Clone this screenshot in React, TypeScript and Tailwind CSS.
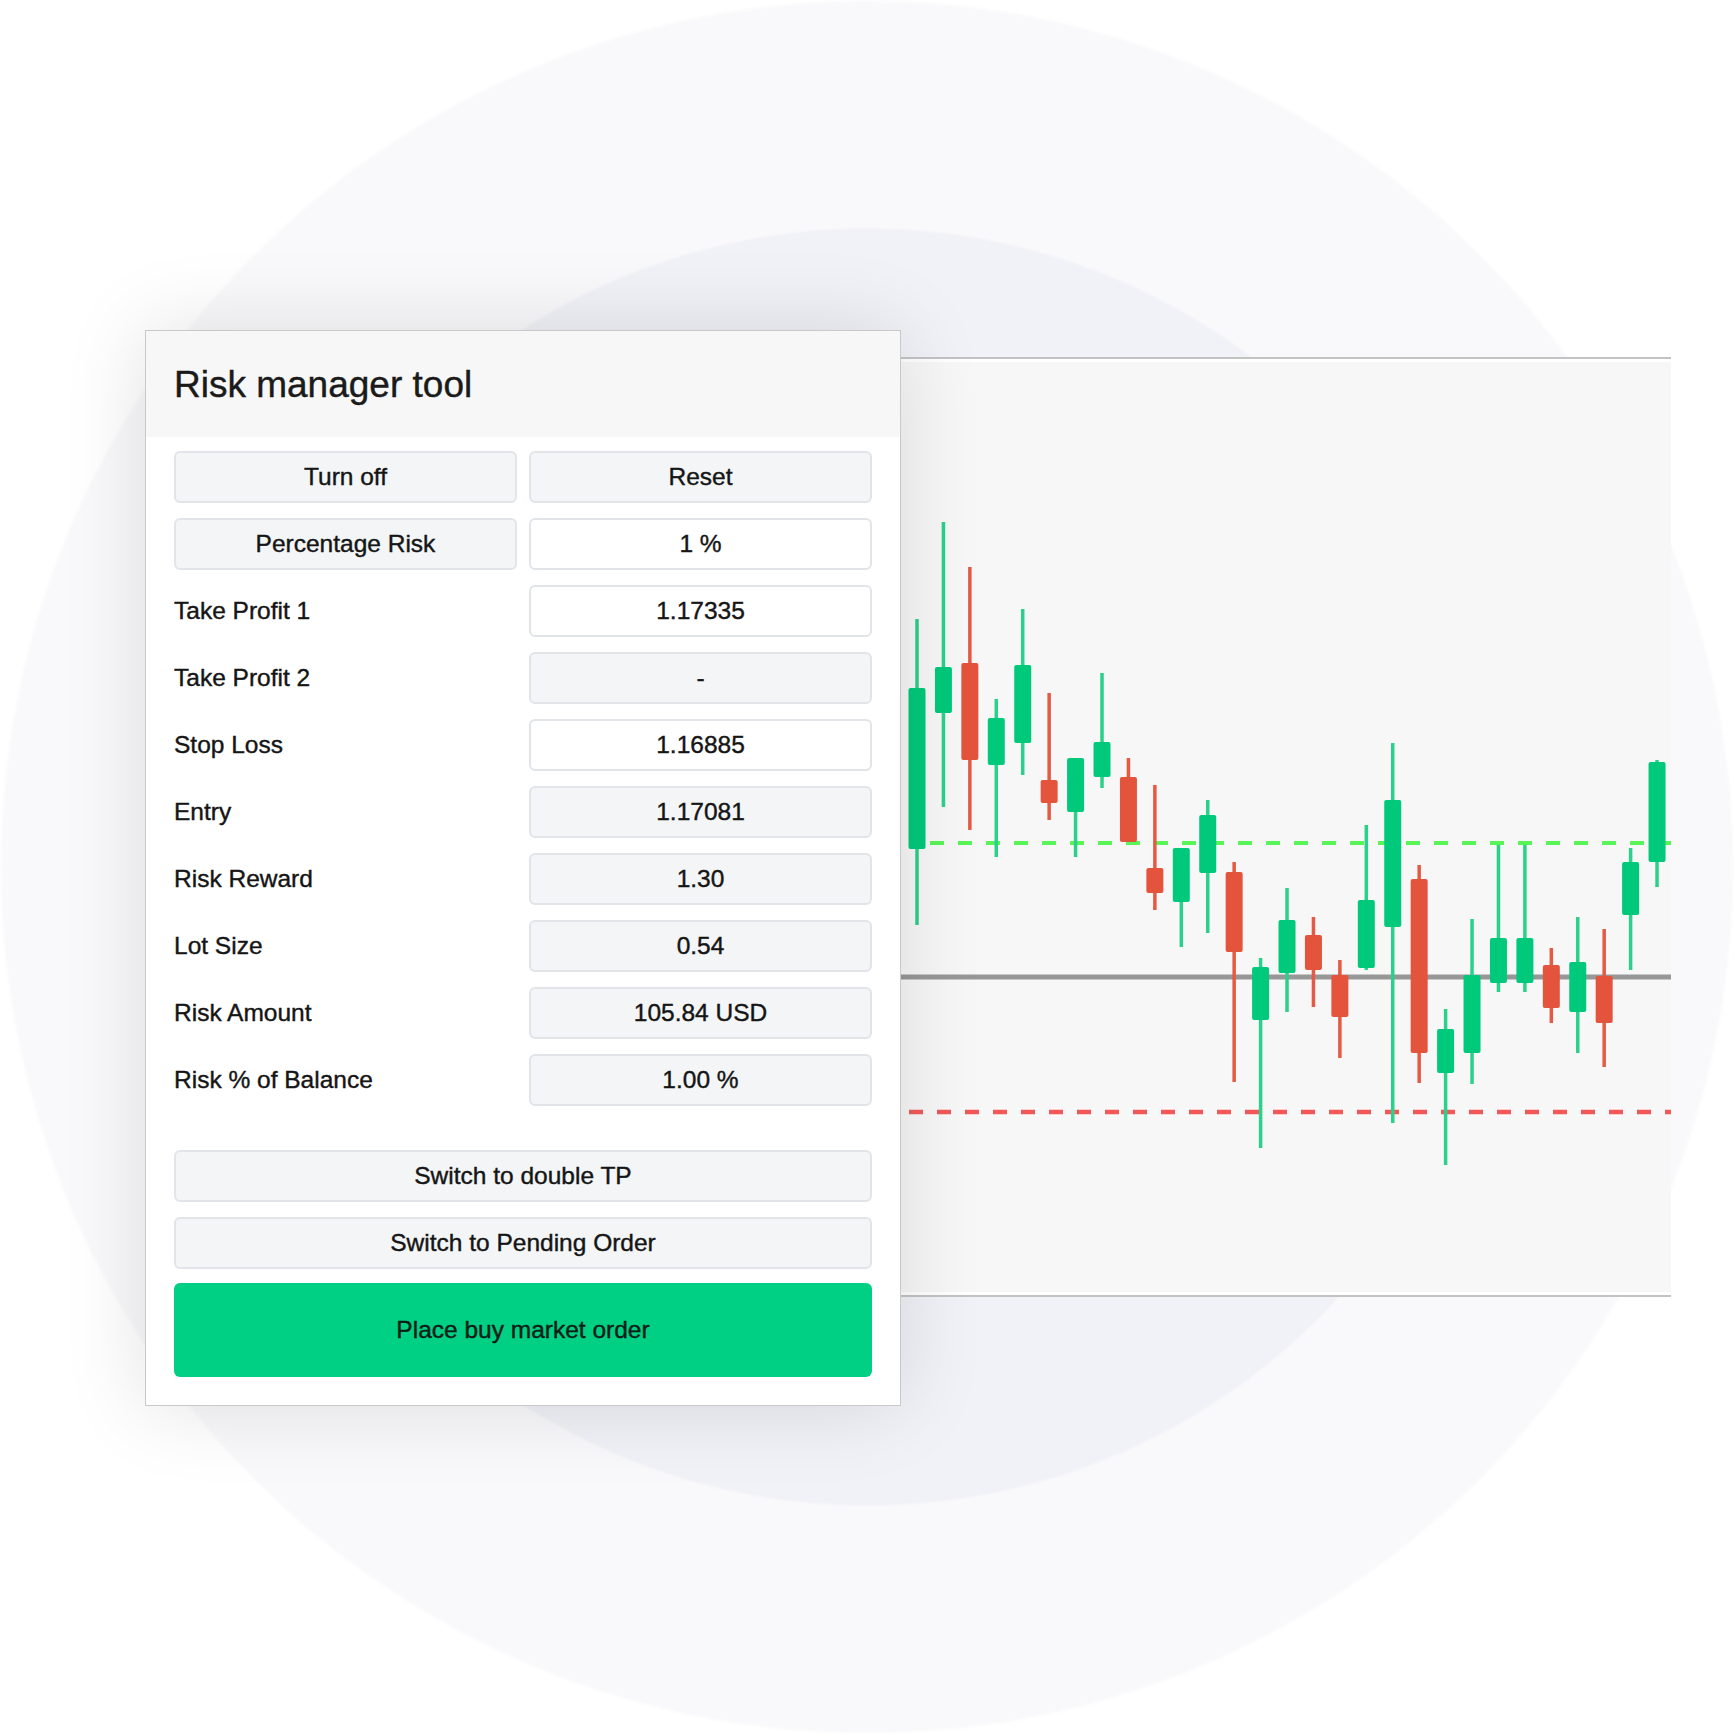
const rows: { label: string; value: string; labelIsButton?: boolean; white?: boolean }[] = [
  { label: "Turn off", value: "Reset", labelIsButton: true },
  { label: "Percentage Risk", value: "1 %", labelIsButton: true, white: true },
  { label: "Take Profit 1", value: "1.17335", white: true },
  { label: "Take Profit 2", value: "-" },
  { label: "Stop Loss", value: "1.16885", white: true },
  { label: "Entry", value: "1.17081" },
  { label: "Risk Reward", value: "1.30" },
  { label: "Lot Size", value: "0.54" },
  { label: "Risk Amount", value: "105.84 USD" },
  { label: "Risk % of Balance", value: "1.00 %" },
];

// [wickTop, wickBottom, bodyTop, bodyBottom, up]
const candles: [number, number, number, number, boolean][] = [
  [619, 925, 688, 849, true],
  [522, 807, 667, 713, true],
  [567, 830, 663, 760, false],
  [699, 857, 718, 765, true],
  [609, 775, 665, 743, true],
  [693, 820, 780, 803, false],
  [758, 857, 758, 812, true],
  [673, 788, 742, 777, true],
  [758, 842, 777, 842, false],
  [785, 910, 868, 893, false],
  [848, 947, 848, 902, true],
  [800, 933, 815, 873, true],
  [862, 1082, 872, 952, false],
  [958, 1148, 967, 1020, true],
  [888, 1012, 920, 973, true],
  [917, 1007, 935, 970, false],
  [960, 1058, 975, 1017, false],
  [825, 970, 900, 968, true],
  [743, 1123, 800, 927, true],
  [865, 1083, 879, 1053, false],
  [1009, 1165, 1029, 1073, true],
  [919, 1084, 975, 1053, true],
  [845, 992, 938, 983, true],
  [845, 992, 938, 983, true],
  [948, 1023, 965, 1008, false],
  [917, 1053, 962, 1012, true],
  [929, 1067, 976, 1023, false],
  [848, 970, 862, 915, true],
  [760, 887, 762, 862, true],
];

const box = "flex h-[52px] items-center justify-center rounded-[6px] border-2 border-[#e1e5e9]";

function Chart() {
  return (
    <div className="mt-[27px] flex h-[940px] w-[770px] flex-col border-y-2 border-[#c3c3c3] bg-white py-[3px]">
      <div className="flex-1 bg-[#f7f7f7]">
        <svg width="770" height="930" viewBox="901 362 770 930" className="block">
          <line x1="901" y1="977" x2="1671" y2="977" stroke="#979797" strokeWidth="5" />
          <line x1="930" y1="843" x2="1671" y2="843" stroke="#58f458" strokeWidth="4" strokeDasharray="14 14" />
          <line x1="909" y1="1112" x2="1671" y2="1112" stroke="#f25858" strokeWidth="4.5" strokeDasharray="14 14" />
          {candles.map(([wt, wb, bt, bb, up], i) => {
            const x = 917 + i * 26.43;
            const body = up ? "#00c97b" : "#e4543d";
            const wick = up ? "#2bd08a" : "#e55a43";
            return (
              <g key={i}>
                <rect x={x - 1.75} y={wt} width="3.5" height={wb - wt} fill={wick} />
                <rect x={x - 8.5} y={bt} width="17" height={bb - bt} rx="2" fill={body} />
              </g>
            );
          })}
        </svg>
      </div>
    </div>
  );
}

function Panel() {
  return (
    <div className="relative z-10 flex w-[756px] flex-col border border-[#c9c9c9] bg-white shadow-[0_0_80px_rgba(0,0,0,0.12)]">
      <div className="flex h-[106px] items-center bg-[#f7f7f7] px-[28px]">
        <h1 className="text-[37px] leading-none text-[#1b1b1b]">Risk manager tool</h1>
      </div>
      <div className="flex flex-col px-[28px] pt-[14px] pb-[28px]">
        <div className="grid grid-cols-2 gap-x-[12px] gap-y-[15px]">
          {rows.map((r) => (
            <div key={r.label} className="contents">
              {r.labelIsButton ? (
                <div className={`${box} bg-[#f3f5f7]`}>{r.label}</div>
              ) : (
                <div className="flex h-[52px] items-center">{r.label}</div>
              )}
              <div className={`${box} ${r.white ? "bg-white" : "bg-[#f3f5f7]"}`}>{r.value}</div>
            </div>
          ))}
        </div>
        <div className={`${box} mt-[44px] bg-[#f3f5f7]`}>Switch to double TP</div>
        <div className={`${box} mt-[15px] bg-[#f3f5f7]`}>Switch to Pending Order</div>
        <button className="mt-[14px] flex h-[94px] items-center justify-center rounded-[6px] bg-[#00d084] text-[#0c1f15]">
          Place buy market order
        </button>
      </div>
    </div>
  );
}

export default function App() {
  return (
    <div className="h-[1734px] w-[1734px] overflow-hidden bg-[radial-gradient(circle_at_center,#f1f1f8_0px,#f1f1f8_637px,#f9f9fb_640px,#f9f9fb_864px,#ffffff_868px)] pl-[145px] pt-[330px] font-['Liberation_Sans',Arial,sans-serif] text-[24.5px] text-[#151515] [-webkit-text-stroke:0.4px_#151515]">
      <div className="flex items-start">
        <Panel />
        <Chart />
      </div>
    </div>
  );
}
